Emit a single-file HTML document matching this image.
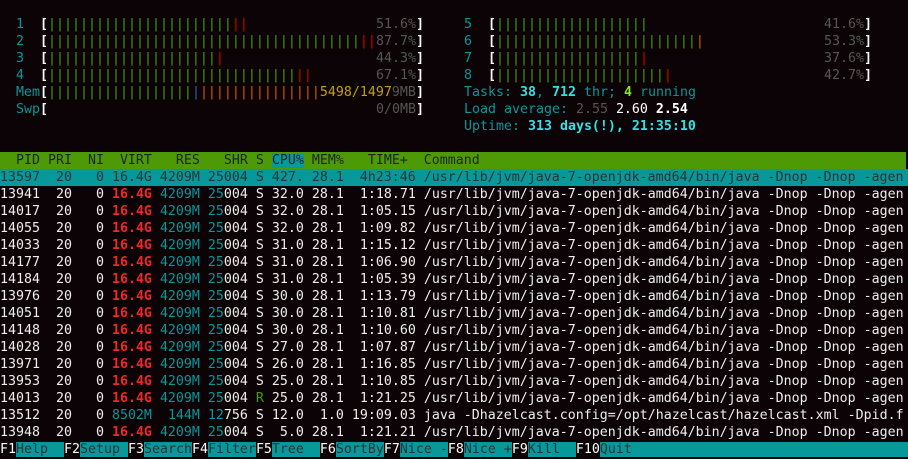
<!DOCTYPE html>
<html><head><meta charset="utf-8"><style>
html,body{margin:0;padding:0;background:#0c0306;width:908px;height:459px;overflow:hidden}
#t{position:absolute;left:0;top:-1px;width:908px;font-family:"DejaVu Sans Mono","Liberation Mono",monospace;font-size:13.29px;color:#eeeeec}
.l{height:17px;line-height:17px;white-space:pre;position:relative;width:908px;overflow:hidden}
.a{position:absolute;top:0;white-space:pre}
.c{color:#06989a}.g{color:#4e9a06}.r{color:#cc0000}.o{color:#c4a000}.b{color:#3465a4}.y{color:#c4a000}
.gr{color:#555753}.w{color:#fff;font-weight:bold}.cb{color:#34e2e2;font-weight:bold}.gb{color:#8ae234;font-weight:bold}
.rb{color:#ef2929;font-weight:bold}.or{color:#ce5c00}
.hd{background:#4e9a06;color:#1e2426}
.sel{background:#06989a;color:#2e3436}
.fb{color:#fff}
.fl{background:#06989a;color:#2e3436}
</style></head><body><div id="t">
<div class="l"></div>
<div class="l"><span class="a c" style="left:16px">1</span><span class="a w" style="left:40px">[</span><span class="a" style="left:48px"><span class="g">|||||||||||||||||||||||</span><span class="r">||</span></span><span class="a gr" style="left:376px">51.6%</span><span class="a w" style="left:416px">]</span><span class="a c" style="left:464px">5</span><span class="a w" style="left:488px">[</span><span class="a g" style="left:496px">|||||||||||||||||||</span><span class="a gr" style="left:824px">41.6%</span><span class="a w" style="left:864px">]</span></div>
<div class="l"><span class="a c" style="left:16px">2</span><span class="a w" style="left:40px">[</span><span class="a" style="left:48px"><span class="g">|||||||||||||||||||||||||||||||||||||||</span><span class="r">||</span></span><span class="a gr" style="left:376px">87.7%</span><span class="a w" style="left:416px">]</span><span class="a c" style="left:464px">6</span><span class="a w" style="left:488px">[</span><span class="a" style="left:496px"><span class="g">|||||||||||||||||||||||||</span><span class="or">|</span></span><span class="a gr" style="left:824px">53.3%</span><span class="a w" style="left:864px">]</span></div>
<div class="l"><span class="a c" style="left:16px">3</span><span class="a w" style="left:40px">[</span><span class="a" style="left:48px"><span class="g">|||||||||||||||||||||</span><span class="r">|</span></span><span class="a gr" style="left:376px">44.3%</span><span class="a w" style="left:416px">]</span><span class="a c" style="left:464px">7</span><span class="a w" style="left:488px">[</span><span class="a" style="left:496px"><span class="g">||||||||||||||||||</span><span class="r">|</span></span><span class="a gr" style="left:824px">37.6%</span><span class="a w" style="left:864px">]</span></div>
<div class="l"><span class="a c" style="left:16px">4</span><span class="a w" style="left:40px">[</span><span class="a" style="left:48px"><span class="g">|||||||||||||||||||||||||||||||</span><span class="r">||</span></span><span class="a gr" style="left:376px">67.1%</span><span class="a w" style="left:416px">]</span><span class="a c" style="left:464px">8</span><span class="a w" style="left:488px">[</span><span class="a" style="left:496px"><span class="g">|||||||||||||||||||||</span><span class="r">|</span></span><span class="a gr" style="left:824px">42.7%</span><span class="a w" style="left:864px">]</span></div>
<div class="l"><span class="a c" style="left:16px">Mem</span><span class="a w" style="left:40px">[</span><span class="a" style="left:48px"><span class="g">||||||||||||||||||</span><span class="b">|</span><span class="or">|||||||||||||||</span><span class="y">5498/1497</span><span class="gr">9MB</span></span><span class="a w" style="left:416px">]</span><span class="a c" style="left:464px">Tasks: <span class="cb">38</span>, <span class="cb">712</span> thr; <span class="gb">4</span> running</span></div>
<div class="l"><span class="a c" style="left:16px">Swp</span><span class="a w" style="left:40px">[</span><span class="a gr" style="left:376px">0/0MB</span><span class="a w" style="left:416px">]</span><span class="a c" style="left:464px">Load average: <span class="gr">2.55</span> <span style="color:#fff">2.60</span> <span class="w">2.54</span></span></div>
<div class="l"><span class="a c" style="left:464px">Uptime: <span class="cb">313 days(!), 21:35:10</span></span></div>
<div class="l"></div>
<div class="l hd" style="width:906px">  PID PRI  NI  VIRT   RES   SHR S <span style="background:#06989a">CPU%</span> MEM%   TIME+  Command</div>
<div class="l sel">13597  20   0 16.4G 4209M 25004 S 427. 28.1  4h23:46 /usr/lib/jvm/java-7-openjdk-amd64/bin/java -Dnop -Dnop -agen</div>
<div class="l">13941  20   0 <span class="rb">16.4G</span> <span class="c">4209M</span> <span class="c">25</span>004 S 32.0 28.1  1:18.71 /usr/lib/jvm/java-7-openjdk-amd64/bin/java -Dnop -Dnop -agen</div>
<div class="l">14017  20   0 <span class="rb">16.4G</span> <span class="c">4209M</span> <span class="c">25</span>004 S 32.0 28.1  1:05.15 /usr/lib/jvm/java-7-openjdk-amd64/bin/java -Dnop -Dnop -agen</div>
<div class="l">14055  20   0 <span class="rb">16.4G</span> <span class="c">4209M</span> <span class="c">25</span>004 S 32.0 28.1  1:09.82 /usr/lib/jvm/java-7-openjdk-amd64/bin/java -Dnop -Dnop -agen</div>
<div class="l">14033  20   0 <span class="rb">16.4G</span> <span class="c">4209M</span> <span class="c">25</span>004 S 31.0 28.1  1:15.12 /usr/lib/jvm/java-7-openjdk-amd64/bin/java -Dnop -Dnop -agen</div>
<div class="l">14177  20   0 <span class="rb">16.4G</span> <span class="c">4209M</span> <span class="c">25</span>004 S 31.0 28.1  1:06.90 /usr/lib/jvm/java-7-openjdk-amd64/bin/java -Dnop -Dnop -agen</div>
<div class="l">14184  20   0 <span class="rb">16.4G</span> <span class="c">4209M</span> <span class="c">25</span>004 S 31.0 28.1  1:05.39 /usr/lib/jvm/java-7-openjdk-amd64/bin/java -Dnop -Dnop -agen</div>
<div class="l">13976  20   0 <span class="rb">16.4G</span> <span class="c">4209M</span> <span class="c">25</span>004 S 30.0 28.1  1:13.79 /usr/lib/jvm/java-7-openjdk-amd64/bin/java -Dnop -Dnop -agen</div>
<div class="l">14051  20   0 <span class="rb">16.4G</span> <span class="c">4209M</span> <span class="c">25</span>004 S 30.0 28.1  1:10.81 /usr/lib/jvm/java-7-openjdk-amd64/bin/java -Dnop -Dnop -agen</div>
<div class="l">14148  20   0 <span class="rb">16.4G</span> <span class="c">4209M</span> <span class="c">25</span>004 S 30.0 28.1  1:10.60 /usr/lib/jvm/java-7-openjdk-amd64/bin/java -Dnop -Dnop -agen</div>
<div class="l">14028  20   0 <span class="rb">16.4G</span> <span class="c">4209M</span> <span class="c">25</span>004 S 27.0 28.1  1:07.87 /usr/lib/jvm/java-7-openjdk-amd64/bin/java -Dnop -Dnop -agen</div>
<div class="l">13971  20   0 <span class="rb">16.4G</span> <span class="c">4209M</span> <span class="c">25</span>004 S 26.0 28.1  1:16.85 /usr/lib/jvm/java-7-openjdk-amd64/bin/java -Dnop -Dnop -agen</div>
<div class="l">13953  20   0 <span class="rb">16.4G</span> <span class="c">4209M</span> <span class="c">25</span>004 S 25.0 28.1  1:10.85 /usr/lib/jvm/java-7-openjdk-amd64/bin/java -Dnop -Dnop -agen</div>
<div class="l">14013  20   0 <span class="rb">16.4G</span> <span class="c">4209M</span> <span class="c">25</span>004 <span class="g">R</span> 25.0 28.1  1:21.25 /usr/lib/jvm/java-7-openjdk-amd64/bin/java -Dnop -Dnop -agen</div>
<div class="l">13512  20   0 <span class="c">8502M</span>  <span class="c">144M</span> <span class="c">12</span>756 S 12.0  1.0 19:09.03 java -Dhazelcast.config=/opt/hazelcast/hazelcast.xml -Dpid.f</div>
<div class="l">13948  20   0 <span class="rb">16.4G</span> <span class="c">4209M</span> <span class="c">25</span>004 S  5.0 28.1  1:21.21 /usr/lib/jvm/java-7-openjdk-amd64/bin/java -Dnop -Dnop -agen</div>
<div class="l" style="height:18px"><span class="fb">F1</span><span class="fl">Help  </span><span class="fb">F2</span><span class="fl">Setup </span><span class="fb">F3</span><span class="fl">Search</span><span class="fb">F4</span><span class="fl">Filter</span><span class="fb">F5</span><span class="fl">Tree  </span><span class="fb">F6</span><span class="fl">SortBy</span><span class="fb">F7</span><span class="fl">Nice -</span><span class="fb">F8</span><span class="fl">Nice +</span><span class="fb">F9</span><span class="fl">Kill  </span><span class="fb">F10</span><span class="fl">Quit                                                            </span></div>
</div>
</body></html>
